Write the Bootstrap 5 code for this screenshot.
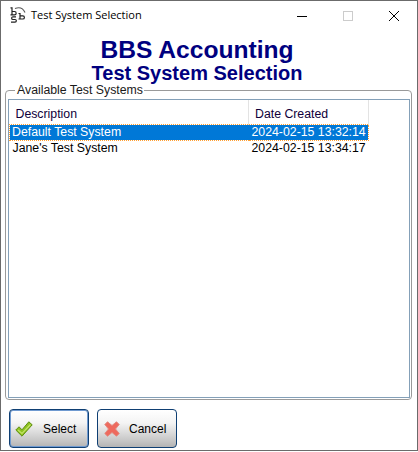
<!DOCTYPE html>
<html lang="en">
<head>
    <meta charset="UTF-8">
    <meta name="viewport" content="width=device-width, initial-scale=1">
    <title>Test System Selection</title>
    <link href="https://cdn.jsdelivr.net/npm/bootstrap@5.3.3/dist/css/bootstrap.min.css" rel="stylesheet">
    <script src="https://cdn.jsdelivr.net/npm/bootstrap@5.3.3/dist/js/bootstrap.bundle.min.js"></script>
    <style>
        html, body {
            height: 452px;
            overflow: hidden;
            background-color: #fff;
        }

        body {
            font-family: "Liberation Sans", Arial, sans-serif;
            font-size: 12px;
            color: #000;
        }

        .app-window {
            width: 418px;
            height: 451px;
            border: 1px solid #6b6b6b;
        }

        .title-bar {
            height: 29px;
            padding-left: 9px;
            font-family: "Open Sans", "Liberation Sans", sans-serif;
            font-size: 11px;
        }

        .title-text {
            margin-left: 5px;
        }

        .win-btn {
            width: 46px;
            height: 29px;
        }

        .head-block {
            color: #00007f;
            font-weight: 700;
            text-align: center;
            padding-right: 24px;
            margin-top: 6px;
        }

        .head-main {
            font-size: 24.6px;
            line-height: 27px;
        }

        .head-sub {
            font-size: 20px;
            line-height: 20px;
        }

        .sys-group {
            margin: 0 5px 0 4px;
            padding: 0 1px 1px 2px;
            height: 317px;
            border: 1px solid #9a9a9a;
            border-radius: 4px;
        }

        .sys-group legend {
            float: none;
            width: auto;
            margin: 0 0 0 7px;
            padding: 0 1px 0 2px;
            font-size: 12.3px;
            line-height: 14px;
            color: #1a1a1a;
        }

        .sys-pane {
            height: 299px;
            margin-top: 2px;
            border: 1px solid #84a0b8;
        }

        .sys-table {
            width: 360px;
            table-layout: fixed;
            margin-bottom: 0;
            font-size: 12.3px;
            color: #000;
        }

        .sys-table th,
        .sys-table td {
            border: 0;
            padding: 0;
            white-space: nowrap;
            overflow: hidden;
        }

        .sys-table th {
            height: 24px;
            font-weight: 400;
            padding-left: 6px;
            border-right: 1px solid #e3e3e3;
            color: #10003a;
        }

        .sys-table td {
            height: 16px;
            line-height: 14px;
            padding-left: 3px;
        }

        .sys-table .col-first {
            width: 239px;
        }

        .sys-table .row-active td {
            --bs-table-bg: #0078d7;
            --bs-table-color: #fff;
            background-color: #0078d7;
            color: #fff;
            border-top: 1px dotted #ffa033;
            border-bottom: 1px dotted #ffa033;
        }

        .sys-table .row-active td:first-child {
            border-left: 1px dotted #ffa033;
            padding-left: 2px;
        }

        .sys-table .row-active td:last-child {
            border-right: 1px dotted #ffa033;
        }

        .foot-bar {
            gap: 8px;
            padding: 9px 0 0 8px;
        }

        .act-btn {
            width: 80px;
            height: 39px;
            padding: 0 0 0 6px;
            border: 1px solid #0f3f73;
            border-radius: 4px;
            font-size: 12px;
            color: #000;
            background: linear-gradient(#ffffff 0%, #f4f4f4 35%, #c4c4c4 85%, #b4b4b4 100%);
        }

        .act-btn:hover {
            color: #000;
            border-color: #0f3f73;
        }

        .act-btn.is-default {
            padding-left: 5px;
            box-shadow: inset 0 0 0 1px #6f9ad0;
        }

        .act-label {
            margin-left: 9px;
        }

        .is-default .act-label {
            margin-left: 10px;
        }
    </style>
</head>
<body>
    <div class="app-window d-flex flex-column">
        <div class="title-bar d-flex align-items-center">
            <svg width="16" height="17" viewBox="0 0 16 17" fill="none" stroke="#222" stroke-width="1.2">
                <path d="M.5 .8h1.500v7M.5 7.800H2M2 4.500h2.500a1.600 1.600 0 0 1 0 3.300H2"/>
                <path d="M8.500 6.500h1.500v5.500M8.500 12H10M10 8.800h2.800a1.600 1.600 0 0 1 0 3.200H10"/>
                <path d="M6 9.800H3a1.300 1.300 0 0 0 0 2.700h2a1.300 1.300 0 0 1 0 2.700H1"/>
                <path d="M5 1.500c4-1.500 8-.5 10 4" stroke="#555"/>
            </svg>
            <span class="title-text">Test System Selection</span>
            <div class="ms-auto d-flex">
                <div class="win-btn d-flex align-items-center justify-content-center">
                    <svg width="10" height="10" viewBox="0 0 10 10"><path d="M0 5.500h10" stroke="#000" stroke-width="1"/></svg>
                </div>
                <div class="win-btn d-flex align-items-center justify-content-center">
                    <svg width="10" height="10" viewBox="0 0 10 10"><rect x=".5" y=".5" width="9" height="9" fill="none" stroke="#ccc"/></svg>
                </div>
                <div class="win-btn d-flex align-items-center justify-content-center">
                    <svg width="10" height="10" viewBox="0 0 10 10"><path d="M0 0l10 10M10 0L0 10" stroke="#000" stroke-width="1"/></svg>
                </div>
            </div>
        </div>

        <div class="head-block">
            <div class="head-main">BBS Accounting</div>
            <div class="head-sub">Test System Selection</div>
        </div>

        <fieldset class="sys-group">
            <legend>Available Test Systems</legend>
            <div class="sys-pane">
                <table class="table sys-table">
                    <thead>
                        <tr>
                            <th class="col-first">Description</th>
                            <th>Date Created</th>
                        </tr>
                    </thead>
                    <tbody>
                        <tr class="row-active">
                            <td>Default Test System</td>
                            <td>2024-02-15 13:32:14</td>
                        </tr>
                        <tr>
                            <td>Jane's Test System</td>
                            <td>2024-02-15 13:34:17</td>
                        </tr>
                    </tbody>
                </table>
            </div>
        </fieldset>

        <div class="foot-bar d-flex">
            <button type="button" class="btn act-btn is-default d-flex align-items-center">
                <svg width="18" height="16" viewBox="0 0 18 16">
                    <path d="M.8 9l3.200-3.200 3 3L13.800 .8l3.400 3L7 15.200z" fill="#8dc21f" stroke="#5f8f12" stroke-width="1" stroke-linejoin="round"/>
                    <path d="M3 9l4 3.500L15.500 3.500" fill="none" stroke="#c4e36a" stroke-width="1.200"/>
                </svg>
                <span class="act-label">Select</span>
            </button>
            <button type="button" class="btn act-btn d-flex align-items-center">
                <svg width="16" height="16" viewBox="0 0 16 16">
                    <path d="M3.500 .8L8 4.500 12.500 .8l2.700 2.700L11.500 8l3.700 4.500-2.700 2.700L8 11.500l-4.500 3.700-2.700-2.700L4.500 8 .8 3.500z" fill="#ee6a5e" stroke="#e2897f" stroke-width="1" stroke-linejoin="round"/>
                </svg>
                <span class="act-label">Cancel</span>
            </button>
        </div>
    </div>
</body>
</html>
